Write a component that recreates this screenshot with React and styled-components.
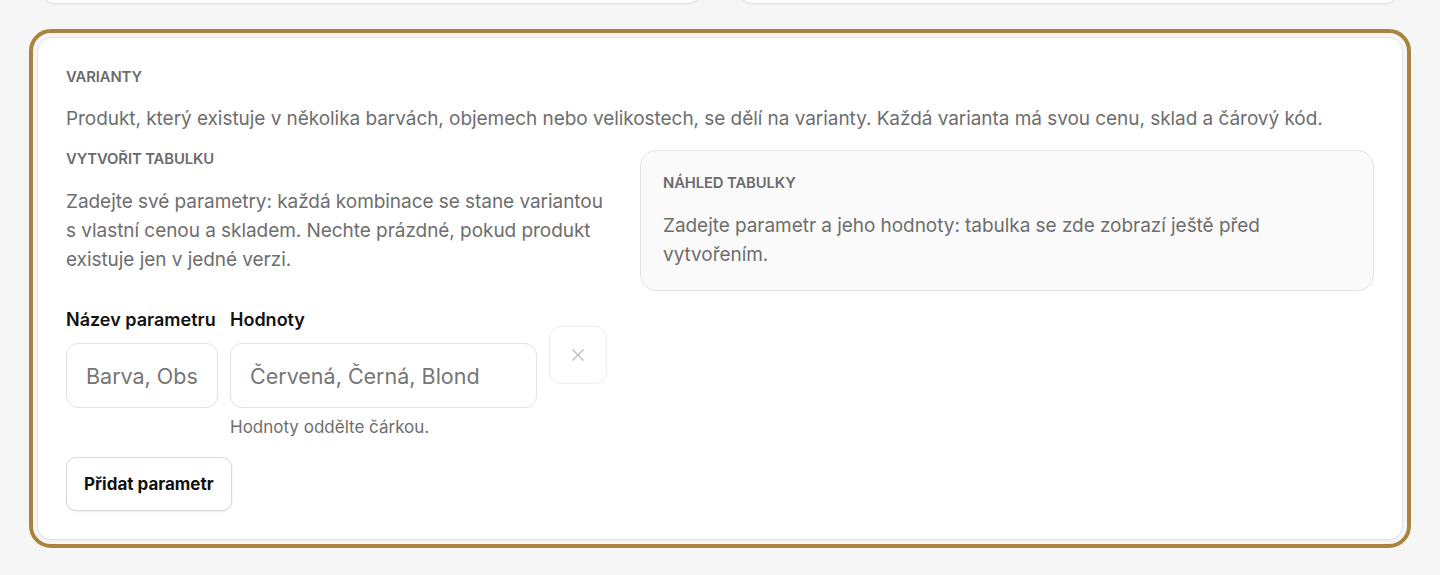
import React from "react";
import styled, { createGlobalStyle } from "styled-components";

const Global = createGlobalStyle`
  html, body { margin: 0; padding: 0; background: #f6f6f6; }
  body { font-family: Inter, "Noto Sans", sans-serif; -webkit-font-smoothing: antialiased; }
  * { box-sizing: border-box; }
`;

const Page = styled.div`
  padding: 0 40px;
  display: flex;
  flex-direction: column;
  gap: 33px;
  height: 575px;
  overflow: hidden;
`;

const TopRow = styled.div`
  display: grid;
  grid-template-columns: 1fr 1fr;
  gap: 34px;
  margin-top: -96px;
`;

const TopCard = styled.div`
  height: 100px;
  background: #fff;
  border: 1px solid #e4e4e4;
  border-radius: 16px;
  box-shadow: 0 1px 2px rgba(0,0,0,0.05);
`;

const Card = styled.section`
  margin: 0 -3px;
  background: #fff;
  border: 1px solid #e4e4e7;
  border-radius: 14px;
  box-shadow: 0 1px 2px rgba(0,0,0,0.04);
  outline: 4px solid #a8843f;
  outline-offset: 4px;
  padding: 28px 28px 28px;
`;

const Eyebrow = styled.h3`
  margin: 0;
  font-size: 14.8px;
  line-height: 22px;
  font-weight: 600;
  color: #6b6b6b;
  text-transform: uppercase;
  letter-spacing: -0.1px;
`;

const Lead = styled.p`
  margin: ${(p) => p.$mt || 0}px 0 0;
  font-size: 19px;
  line-height: 29px;
  color: #6e6e6e;
  letter-spacing: -0.05px;
`;

const Columns = styled.div`
  display: grid;
  grid-template-columns: 541px 1fr;
  gap: 33px;
  margin-top: 15px;
  align-items: start;
`;

const Builder = styled.div`
  display: flex;
  flex-direction: column;
`;

const ParamRow = styled.div`
  display: flex;
  gap: 12px;
  align-items: flex-start;
  margin-top: 35px;
`;

const Field = styled.div`
  display: flex;
  flex-direction: column;
  width: ${(p) => p.$w}px;
`;

const Label = styled.label`
  font-size: 18px;
  line-height: 22px;
  font-weight: 600;
  color: #111;
  white-space: nowrap;
  letter-spacing: 0;
`;

const Input = styled.input`
  margin-top: 12px;
  height: 65px;
  width: 100%;
  border: 1px solid #e3e3e3;
  border-radius: 12px;
  background: #fff;
  padding: 0 19px;
  font-family: inherit;
  font-size: 21.5px;
  color: #111;
  outline: none;
  &::placeholder { color: #767676; }
`;

const Hint = styled.div`
  margin-top: 9px;
  font-size: 17px;
  line-height: 20px;
  color: #6e6e6e;
`;

const IconButton = styled.button`
  margin-top: 17px;
  width: 58px;
  height: 58px;
  border: 1px solid #ededed;
  border-radius: 12px;
  background: #fff;
  display: flex;
  align-items: center;
  justify-content: center;
  color: #b8b8b8;
  padding: 0;
`;

const AddButton = styled.button`
  align-self: flex-start;
  margin-top: 20px;
  height: 54px;
  padding: 0 17px;
  border: 1px solid #d9d9d9;
  border-radius: 10px;
  background: #fff;
  box-shadow: 0 1px 2px rgba(0,0,0,0.08);
  font-family: inherit;
  font-size: 17px;
  font-weight: 700;
  color: #111;
`;

const Preview = styled.div`
  margin-top: 2px;
  background: #fafafa;
  border: 1px solid #e5e5e5;
  border-radius: 16px;
  padding: 21px 22px 21px;
`;

export default function App() {
  return (
    <>
      <Global />
      <Page>
        <TopRow>
          <TopCard />
          <TopCard />
        </TopRow>
        <Card>
          <Eyebrow>Varianty</Eyebrow>
          <Lead $mt={16}>
            Produkt, který existuje v několika barvách, objemech nebo velikostech, se dělí na varianty. Každá varianta má svou cenu, sklad a čárový kód.
          </Lead>
          <Columns>
            <Builder>
              <Eyebrow>Vytvořit tabulku</Eyebrow>
              <Lead $mt={17}>
                Zadejte své parametry: každá kombinace se stane variantou s vlastní cenou a skladem. Nechte prázdné, pokud produkt existuje jen v jedné verzi.
              </Lead>
              <ParamRow>
                <Field $w={152}>
                  <Label>Název parametru</Label>
                  <Input placeholder="Barva, Obsah" />
                </Field>
                <Field $w={307}>
                  <Label>Hodnoty</Label>
                  <Input placeholder="Červená, Černá, Blond" />
                  <Hint>Hodnoty oddělte čárkou.</Hint>
                </Field>
                <IconButton aria-label="Odebrat">
                  <svg width="18" height="18" viewBox="0 0 24 24" fill="none" stroke="currentColor" strokeWidth="1.5" strokeLinecap="round">
                    <path d="M5 5l14 14M19 5L5 19" />
                  </svg>
                </IconButton>
              </ParamRow>
              <AddButton>Přidat parametr</AddButton>
            </Builder>
            <Preview>
              <Eyebrow>Náhled tabulky</Eyebrow>
              <Lead $mt={17}>
                Zadejte parametr a jeho hodnoty: tabulka se zde zobrazí ještě před vytvořením.
              </Lead>
            </Preview>
          </Columns>
        </Card>
      </Page>
    </>
  );
}
